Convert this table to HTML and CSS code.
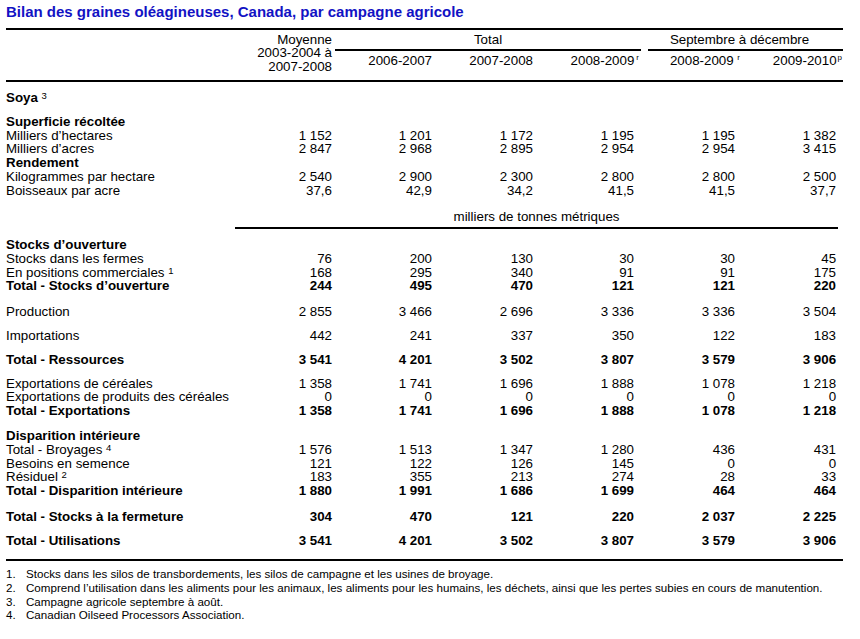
FILE: index.html
```html
<!DOCTYPE html>
<html lang="fr">
<head>
<meta charset="utf-8">
<title>Bilan des graines oléagineuses, Canada</title>
<link rel="stylesheet" href="styles.css">
</head>
<body>
<main class="page">
<h1 class="title">Bilan des graines oléagineuses, Canada, par campagne agricole</h1>
<table class="bilan">
<colgroup>
<col class="c-lab"><col class="c-n1"><col class="c-n2"><col class="c-n3"><col class="c-n4"><col class="c-n5"><col class="c-n6">
</colgroup>
<thead>
<tr class="h1r">
<th class="lab hb" rowspan="2"></th>
<th class="moy hb" rowspan="2">Moyenne<br>2003-2004 à<br>2007-2008</th>
<th class="grp" colspan="3"><div class="grp-rule tot-g">Total</div></th>
<th class="grp" colspan="2"><div class="grp-rule sep-g">Septembre à décembre</div></th>
</tr>
<tr class="h2r">
<th class="n2 hb">2006-2007</th>
<th class="n3 hb">2007-2008</th>
<th class="n4 hb">2008-2009<sup class="hs hs-r">r</sup></th>
<th class="n5 hb">2008-2009 <sup class="hs hs-r">r</sup></th>
<th class="n6 hb">2009-2010<sup class="hs hs-p">p</sup></th>
</tr>
</thead>
<tbody>
<tr class="sec g9"><td>Soya <sup class="fn">3</sup></td><td></td><td></td><td></td><td></td><td></td><td></td></tr>
<tr class="sec g10"><td>Superficie récoltée</td><td></td><td></td><td></td><td></td><td></td><td></td></tr>
<tr><td>Milliers d’hectares</td><td>1 152</td><td>1 201</td><td>1 172</td><td>1 195</td><td>1 195</td><td>1 382</td></tr>
<tr><td>Milliers d’acres</td><td>2 847</td><td>2 968</td><td>2 895</td><td>2 954</td><td>2 954</td><td>3 415</td></tr>
<tr class="sec"><td>Rendement</td><td></td><td></td><td></td><td></td><td></td><td></td></tr>
<tr><td>Kilogrammes par hectare</td><td>2 540</td><td>2 900</td><td>2 300</td><td>2 800</td><td>2 800</td><td>2 500</td></tr>
<tr><td>Boisseaux par acre</td><td>37,6</td><td>42,9</td><td>34,2</td><td>41,5</td><td>41,5</td><td>37,7</td></tr>
<tr class="unit g12"><td></td><td class="unit-cell" colspan="6"><div class="unit-rule">milliers de tonnes métriques</div></td></tr>
<tr class="sec g9"><td>Stocks d’ouverture</td><td></td><td></td><td></td><td></td><td></td><td></td></tr>
<tr><td>Stocks dans les fermes</td><td>76</td><td>200</td><td>130</td><td>30</td><td>30</td><td>45</td></tr>
<tr><td>En positions commerciales <sup class="fn">1</sup></td><td>168</td><td>295</td><td>340</td><td>91</td><td>91</td><td>175</td></tr>
<tr class="tot"><td>Total - Stocks d’ouverture</td><td>244</td><td>495</td><td>470</td><td>121</td><td>121</td><td>220</td></tr>
<tr class="g12"><td>Production</td><td>2 855</td><td>3 466</td><td>2 696</td><td>3 336</td><td>3 336</td><td>3 504</td></tr>
<tr class="g10"><td>Importations</td><td>442</td><td>241</td><td>337</td><td>350</td><td>122</td><td>183</td></tr>
<tr class="tot g10"><td>Total - Ressources</td><td>3 541</td><td>4 201</td><td>3 502</td><td>3 807</td><td>3 579</td><td>3 906</td></tr>
<tr class="g10"><td>Exportations de céréales</td><td>1 358</td><td>1 741</td><td>1 696</td><td>1 888</td><td>1 078</td><td>1 218</td></tr>
<tr><td>Exportations de produits des céréales</td><td>0</td><td>0</td><td>0</td><td>0</td><td>0</td><td>0</td></tr>
<tr class="tot"><td>Total - Exportations</td><td>1 358</td><td>1 741</td><td>1 696</td><td>1 888</td><td>1 078</td><td>1 218</td></tr>
<tr class="sec g11"><td>Disparition intérieure</td><td></td><td></td><td></td><td></td><td></td><td></td></tr>
<tr><td>Total - Broyages <sup class="fn">4</sup></td><td>1 576</td><td>1 513</td><td>1 347</td><td>1 280</td><td>436</td><td>431</td></tr>
<tr><td>Besoins en semence</td><td>121</td><td>122</td><td>126</td><td>145</td><td>0</td><td>0</td></tr>
<tr><td>Résiduel <sup class="fn">2</sup></td><td>183</td><td>355</td><td>213</td><td>274</td><td>28</td><td>33</td></tr>
<tr class="tot"><td>Total - Disparition intérieure</td><td>1 880</td><td>1 991</td><td>1 686</td><td>1 699</td><td>464</td><td>464</td></tr>
<tr class="tot g12"><td>Total - Stocks à la fermeture</td><td>304</td><td>470</td><td>121</td><td>220</td><td>2 037</td><td>2 225</td></tr>
<tr class="tot g10 last"><td>Total - Utilisations</td><td>3 541</td><td>4 201</td><td>3 502</td><td>3 807</td><td>3 579</td><td>3 906</td></tr>
</tbody>
</table>
<ol class="notes">
<li><span class="fn-n">1.</span><span>Stocks dans les silos de transbordements, les silos de campagne et les usines de broyage.</span></li>
<li><span class="fn-n">2.</span><span>Comprend l’utilisation dans les aliments pour les animaux, les aliments pour les humains, les déchets, ainsi que les pertes subies en cours de manutention.</span></li>
<li><span class="fn-n">3.</span><span>Campagne agricole septembre à août.</span></li>
<li><span class="fn-n">4.</span><span>Canadian Oilseed Processors Association.</span></li>
</ol>
</main>
</body>
</html>
```
FILE: styles.css
```css
html, body {
  margin: 0;
  padding: 0;
  background: #ffffff;
}
body {
  font-family: "Liberation Sans", Arial, sans-serif;
  color: #000000;
}
.page {
  width: 837px;
  padding: 3px 0 0 6px;
}
.title {
  margin: 0 0 7px;
  font-size: 15px;
  line-height: 18px;
  font-weight: bold;
  color: #1212c4;
}
.bilan {
  width: 837px;
  table-layout: fixed;
  border-collapse: separate;
  border-spacing: 0;
  font-size: 13.33px;
  line-height: 13.8px;
}
.c-lab { width: 226px; }
.c-n1 { width: 103px; }
.c-n2 { width: 101px; }
.c-n3 { width: 101px; }
.c-n4 { width: 107px; }
.c-n5 { width: 100px; }
.c-n6 { width: 99px; }

.bilan th {
  font-weight: normal;
  padding: 0;
  white-space: nowrap;
}
.h1r th {
  border-top: 2px solid #000;
  vertical-align: top;
  padding-top: 3px;
}
.hb {
  border-bottom: 2px solid #000;
}
.h1r .moy {
  vertical-align: bottom;
  text-align: right;
  padding: 0 3px 6px 0;
}
.grp-rule {
  text-align: center;
  line-height: 14px;
  padding-bottom: 2px;
  border-bottom: 2px solid #000;
}
.tot-g { margin-right: 3px; }
.sep-g { margin-left: 4px; padding-right: 12px; }

.h2r th {
  vertical-align: top;
  text-align: right;
  line-height: 14px;
  padding: 3px 0 12px;
}
.h2r .n2 { padding-right: 4px; }
.h2r .n3 { padding-right: 4px; }
.h2r .n4 { padding-right: 10px; }
.h2r .n5 { padding-right: 9px; }
.h2r .n6 { padding-right: 7px; }

.hs {
  font-size: 8px;
  line-height: 0;
  vertical-align: 5px;
}
.hs-r { margin-left: 2px; margin-right: -5px; }
.h2r .n5 .hs-r { margin-left: 0; margin-right: -5px; }
.hs-p { margin-left: 1px; margin-right: -6px; }

.bilan td {
  padding: 0;
  white-space: nowrap;
  vertical-align: top;
}
.bilan tbody td + td { text-align: right; }
.bilan tbody td:nth-child(2) { padding-right: 3px; }
.bilan tbody td:nth-child(3) { padding-right: 4px; }
.bilan tbody td:nth-child(4) { padding-right: 4px; }
.bilan tbody td:nth-child(5) { padding-right: 10px; }
.bilan tbody td:nth-child(6) { padding-right: 9px; }
.bilan tbody td:nth-child(7) { padding-right: 7px; }

.sec td:first-child { font-weight: bold; }
.tot td { font-weight: bold; }

.fn {
  font-size: 9.5px;
  line-height: 0;
  vertical-align: 3px;
  font-weight: normal;
}

.g9 td { padding-top: 9px; }
.g10 td { padding-top: 10px; }
.g11 td { padding-top: 11px; }
.g12 td { padding-top: 12px; }

.bilan tbody td.unit-cell {
  padding-right: 0;
  text-align: center;
}
.unit-rule {
  margin: 0 5px 0 3px;
  padding-bottom: 3.6px;
  border-bottom: 2px solid #000;
}

.last td {
  padding-bottom: 11.4px;
  border-bottom: 2px solid #000;
}

.notes {
  margin: 6px 0 0;
  padding: 0;
  list-style: none;
  font-size: 11.6px;
  line-height: 13.8px;
}
.notes li {
  display: flex;
}
.fn-n {
  flex: none;
  width: 20px;
}
```
